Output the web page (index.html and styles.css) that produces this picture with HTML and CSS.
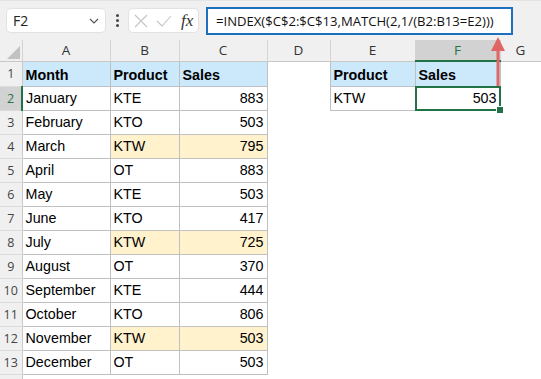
FILE: index.html
```html
<!DOCTYPE html>
<html lang="en">
<head>
  <meta charset="UTF-8">
  <title>INDEX MATCH last match</title>
  <link rel="stylesheet" href="styles.css">
</head>
<body>
  <div class="app">
    <div class="toolbar">
      <div class="name-box">
        <span>F2</span>
        <svg width="10" height="6" viewBox="0 0 10 6"><path d="M1 1L5 5L9 1" fill="none" stroke="#555" stroke-width="1.2"/></svg>
      </div>
      <div class="dots"><i></i><i></i><i></i></div>
      <div class="fx-box">
        <svg width="14" height="14" viewBox="0 0 14 14"><path d="M1 1L13 13M13 1L1 13" stroke="#c4c4c4" stroke-width="1.1"/></svg>
        <svg width="16" height="12" viewBox="0 0 16 12"><path d="M1 6L6 11L15 1" fill="none" stroke="#c4c4c4" stroke-width="1.1"/></svg>
        <span class="fx">fx</span>
      </div>
      <div class="formula">=INDEX($C$2:$C$13,MATCH(2,1/(B2:B13=E2)))</div>
    </div>

    <table class="sheet">
      <colgroup>
        <col style="width:22px"><col style="width:88px"><col style="width:69px"><col style="width:88px">
        <col style="width:63px"><col style="width:85px"><col style="width:85px"><col style="width:41px">
      </colgroup>
      <thead>
        <tr>
          <th class="corner"><span class="tri"></span></th>
          <th>A</th><th>B</th><th>C</th><th>D</th><th>E</th><th class="sel">F</th><th>G</th>
        </tr>
      </thead>
      <tbody id="rows"></tbody>
    </table>

    <svg class="arrow" width="20" height="52" viewBox="0 0 20 52">
      <path d="M10 14V50" stroke="#e06666" stroke-width="3"/>
      <path d="M3 15L10 1L17 15Z" fill="#e06666"/>
    </svg>
  </div>

  <script>
    const data = [
      ['January', 'KTE', 883], ['February', 'KTO', 503], ['March', 'KTW', 795],
      ['April', 'OT', 883], ['May', 'KTE', 503], ['June', 'KTO', 417],
      ['July', 'KTW', 725], ['August', 'OT', 370], ['September', 'KTE', 444],
      ['October', 'KTO', 806], ['November', 'KTW', 503], ['December', 'OT', 503]
    ];

    const rows = document.getElementById('rows');
    let html = '<tr class="r1"><th>1</th><td class="d hd">Month</td><td class="d hd">Product</td>' +
      '<td class="d hd">Sales</td><td></td><td class="d hd">Product</td><td class="d hd">Sales</td><td></td></tr>';

    data.forEach((row, i) => {
      const n = i + 2;
      const hl = row[1] === 'KTW' ? ' hl' : '';
      let extra = '<td></td><td></td>';
      if (n === 2) extra = '<td class="d">KTW</td><td class="d num active">503</td>';
      html += '<tr><th' + (n === 2 ? ' class="sel"' : '') + '>' + n + '</th>' +
        '<td class="d">' + row[0] + '</td>' +
        '<td class="d' + hl + '">' + row[1] + '</td>' +
        '<td class="d num' + hl + '">' + row[2] + '</td>' +
        '<td></td>' + extra + '<td></td></tr>';
    });

    html += '<tr class="last"><th></th><td></td><td></td><td></td><td></td><td></td><td></td><td></td></tr>';
    rows.innerHTML = html;
  </script>
</body>
</html>
```

FILE: styles.css
```css
body {
  margin: 0;
  background: #ffffff;
  font-family: "Liberation Sans", Arial, sans-serif;
}

.app {
  position: relative;
  width: 541px;
  height: 379px;
  overflow: hidden;
}

.toolbar {
  height: 40px;
  box-sizing: border-box;
  padding: 7px 0 0 6px;
  display: flex;
  align-items: flex-start;
  background: #f0f0f0;
  border-top: 1px solid #e4e4e4;
}

.name-box {
  width: 100px;
  height: 25px;
  box-sizing: border-box;
  background: #ffffff;
  border: 1px solid #e2e2e2;
  border-radius: 5px;
  display: flex;
  align-items: center;
  justify-content: space-between;
  padding: 0 6px 0 6px;
  font-family: "Open Sans", sans-serif;
  font-size: 14px;
  color: #222;
}

.dots {
  width: 22px;
  height: 25px;
  display: flex;
  flex-direction: column;
  align-items: center;
  justify-content: center;
  gap: 2px;
}

.dots i {
  width: 3px;
  height: 3px;
  background: #444;
  border-radius: 50%;
}

.fx-box {
  width: 71px;
  height: 25px;
  box-sizing: border-box;
  background: #ffffff;
  border: 1px solid #e2e2e2;
  border-radius: 5px;
  display: flex;
  align-items: center;
  padding: 0 0 0 5px;
  gap: 8px;
}

.fx {
  font-family: "Liberation Serif", serif;
  font-style: italic;
  font-size: 17px;
  color: #333;
  margin-left: 1px;
}

.formula {
  margin-left: 7px;
  width: 307px;
  height: 28px;
  box-sizing: border-box;
  border: 2px solid #1f6fbf;
  background: #ffffff;
  display: flex;
  align-items: center;
  padding-left: 8px;
  font-family: "Open Sans", sans-serif;
  font-size: 13.1px;
  color: #111;
  white-space: nowrap;
  margin-top: -1px;
}

.sheet {
  table-layout: fixed;
  border-collapse: collapse;
  width: 541px;
}

.sheet thead th {
  height: 20px;
  padding: 0;
  background: #f0f0f0;
  border-right: 1px solid #d4d4d4;
  border-bottom: 1px solid #c8c8c8;
  font-family: "Open Sans", sans-serif;
  font-weight: normal;
  font-size: 13.5px;
  color: #333;
}

.sheet thead th.sel {
  background: #d2d2d2;
  border-bottom: 2px solid #217346;
  color: #217346;
}

.corner {
  position: relative;
}

.tri {
  position: absolute;
  right: 2px;
  bottom: 2px;
  width: 0;
  height: 0;
  border-left: 13px solid transparent;
  border-bottom: 13px solid #c2c2c2;
}

.sheet tbody tr {
  height: 24px;
}

.sheet tbody tr.r1 {
  height: 25px;
}

.sheet tbody th {
  padding: 0;
  background: #f0f0f0;
  border-right: 1px solid #c8c8c8;
  border-bottom: 1px solid #dcdcdc;
  font-family: "Open Sans", sans-serif;
  font-weight: normal;
  font-size: 12.5px;
  color: #444;
  text-align: center;
}

.sheet tbody th.sel {
  background: #d2d2d2;
  border-right: 2px solid #217346;
  color: #217346;
}

.sheet td {
  padding: 0 3px;
  font-size: 14.3px;
  color: #000;
  white-space: nowrap;
  overflow: visible;
}

.sheet td.d {
  border: 1px solid #c0c0c0;
}

.sheet td.hd {
  background: #cce9fc;
  font-weight: bold;
  padding-top: 2px;
}

.sheet td.hl {
  background: #fff2cc;
}

.sheet td.num {
  text-align: right;
}

.sheet td.active {
  position: relative;
}

.sheet td.active::after {
  content: "";
  position: absolute;
  left: -1px;
  top: -1px;
  right: -1px;
  bottom: -1px;
  border: 2px solid #217346;
}

.sheet td.active::before {
  content: "";
  position: absolute;
  right: -4px;
  bottom: -4px;
  width: 6px;
  height: 6px;
  background: #217346;
  border: 1px solid #ffffff;
  z-index: 1;
}

.arrow {
  position: absolute;
  left: 488px;
  top: 36px;
}
```
